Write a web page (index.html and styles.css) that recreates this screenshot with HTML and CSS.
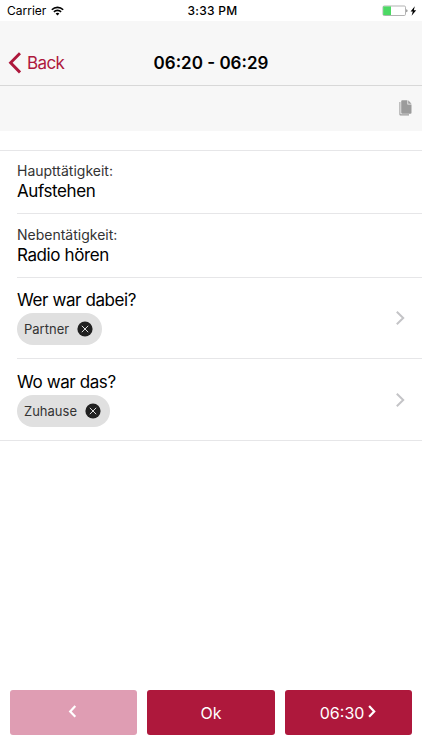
FILE: index.html
```html
<!DOCTYPE html>
<html lang="de">
<head>
    <meta charset="UTF-8">
    <meta name="viewport" content="width=device-width, initial-scale=1.0">
    <title>06:20 - 06:29</title>
    <link rel="stylesheet" href="styles.css">
</head>
<body>
    <div class="status-bar">
        <div class="status-left">
            <span class="carrier">Carrier</span>
            <svg class="wifi" width="13" height="10" viewBox="0 0 13 10" fill="none" stroke="#000" stroke-width="1.6">
                <path d="M0.8 3.7a8.1 8.1 0 0 1 11.4 0"/>
                <path d="M2.9 5.9a5.1 5.1 0 0 1 7.2 0"/>
                <path d="M6.5 9.5L4.6 7.6a2.7 2.7 0 0 1 3.8 0z" fill="#000" stroke="none"/>
            </svg>
        </div>
        <span class="clock">3:33 PM</span>
        <div class="status-right">
            <svg width="36" height="12" viewBox="0 0 36 12">
                <rect x="1" y="1" width="22.5" height="9.5" rx="1.2" fill="#fff" stroke="#aaa" stroke-width="0.9"/>
                <rect x="1.2" y="1.4" width="7.8" height="8.7" fill="#4cd964"/>
                <path d="M24.3 4.2c1.6.4 1.6 2.7 0 3.1z" fill="#777"/>
                <path d="M32.8 1.2L28.6 6.5h2.2l-1.2 4.3 4.6-5.6h-2.4z" fill="#000"/>
            </svg>
        </div>
    </div>

    <header class="nav-bar">
        <a href="#" class="back">
            <svg width="13" height="22" viewBox="0 0 13 22" fill="none" stroke="#ae183c" stroke-width="2.9">
                <path d="M12 1.2L2.6 10.8l9.4 9.6"/>
            </svg>
            <span>Back</span>
        </a>
        <h1>06:20 - 06:29</h1>
    </header>

    <div class="toolbar">
        <svg width="13" height="16" viewBox="0 0 13 16">
            <path d="M0.4 2h1v12.2h8.6v1.4H1.4a1 1 0 0 1-1-1z" fill="#9b9b9b"/>
            <path d="M3.2 0.3h5.2v4.2h4.1v8.2a1 1 0 0 1-1 1H3.2a1 1 0 0 1-1-1V1.3a1 1 0 0 1 1-1z" fill="#9b9b9b"/>
            <path d="M9.2 0.3l3.3 3.4H9.2z" fill="#9b9b9b"/>
        </svg>
    </div>

    <main class="list">
        <div class="item">
            <span class="label">Haupttätigkeit:</span>
            <span class="value">Aufstehen</span>
        </div>
        <div class="item">
            <span class="label">Nebentätigkeit:</span>
            <span class="value">Radio hören</span>
        </div>
        <div class="item item-link">
            <div class="item-content">
                <span class="value">Wer war dabei?</span>
                <div class="chip">
                    <span>Partner</span>
                    <svg width="16" height="16" viewBox="0 0 16 16">
                        <circle cx="8" cy="8" r="7.6" fill="#202020"/>
                        <path d="M4.8 4.8l6.4 6.4M11.2 4.8l-6.4 6.4" stroke="#ddd" stroke-width="1"/>
                    </svg>
                </div>
            </div>
            <svg class="arrow" width="9" height="14" viewBox="0 0 9 14" fill="none" stroke="#c4c4c7" stroke-width="2">
                <path d="M0.8 0.8L7.2 7 0.8 13.2"/>
            </svg>
        </div>
        <div class="item item-link">
            <div class="item-content">
                <span class="value">Wo war das?</span>
                <div class="chip">
                    <span>Zuhause</span>
                    <svg width="16" height="16" viewBox="0 0 16 16">
                        <circle cx="8" cy="8" r="7.6" fill="#202020"/>
                        <path d="M4.8 4.8l6.4 6.4M11.2 4.8l-6.4 6.4" stroke="#ddd" stroke-width="1"/>
                    </svg>
                </div>
            </div>
            <svg class="arrow" width="9" height="14" viewBox="0 0 9 14" fill="none" stroke="#c4c4c7" stroke-width="2">
                <path d="M0.8 0.8L7.2 7 0.8 13.2"/>
            </svg>
        </div>
    </main>

    <footer class="buttons">
        <button class="btn" disabled>
            <svg width="12" height="15" viewBox="0 0 12 15" fill="none" stroke="#fff" stroke-width="2.2">
                <path d="M7.3 1L2.2 6.4l5.1 5.4"/>
            </svg>
        </button>
        <button class="btn">Ok</button>
        <button class="btn">
            <span>06:30</span>
            <svg width="8" height="15" viewBox="0 0 8 15" fill="none" stroke="#fff" stroke-width="2.2">
                <path d="M1.1 1l5.1 5.4-5.1 5.4"/>
            </svg>
        </button>
    </footer>
</body>
</html>
```

FILE: styles.css
```css
* {
    box-sizing: border-box;
}

body {
    font-family: Inter, 'Liberation Sans', sans-serif;
    background: #fff;
    color: #000;
    margin: 0;
    height: 750px;
    display: flex;
    flex-direction: column;
    overflow: hidden;
}

svg {
    display: block;
    flex-shrink: 0;
}

.status-bar {
    height: 21px;
    padding: 0 4px 0 7px;
    display: grid;
    grid-template-columns: 1fr auto 1fr;
    align-items: center;
    font-size: 12px;
}

.status-left {
    display: flex;
    align-items: center;
    gap: 5px;
}

.clock {
    font-weight: 500;
    letter-spacing: 0.3px;
}

.status-right {
    display: flex;
    justify-content: flex-end;
}

.nav-bar {
    height: 65px;
    padding: 20px 8px 0;
    background: #f7f7f7;
    border-bottom: 1px solid #d8d8d8;
    display: grid;
    grid-template-columns: 1fr auto 1fr;
    align-items: center;
}

.back {
    display: flex;
    align-items: center;
    gap: 6px;
    color: #ae183c;
    font-size: 17px;
    letter-spacing: -0.6px;
    text-decoration: none;
}

h1 {
    font-size: 17px;
    font-weight: 600;
    margin: 0;
}

.toolbar {
    height: 45px;
    padding: 0 10px 2px 0;
    background: #f7f7f7;
    display: flex;
    align-items: center;
    justify-content: flex-end;
}

.list {
    margin-top: 19px;
    padding-left: 17px;
    border-top: 1px solid #e6e6e8;
    border-bottom: 1px solid #e6e6e8;
}

.item {
    height: 63px;
    padding-top: 10px;
    display: flex;
    flex-direction: column;
    border-bottom: 1px solid #e6e6e8;
}

.item:nth-child(2) {
    height: 64px;
    padding-top: 11px;
}

.item-link {
    height: 81px;
    padding: 12px 17px 0 0;
    flex-direction: row;
    justify-content: space-between;
}

.item:last-child {
    padding-top: 13px;
    border-bottom: none;
}

.label {
    font-size: 14px;
    line-height: 20px;
    color: #333;
}

.value {
    display: block;
    font-size: 17px;
    line-height: 21px;
    letter-spacing: -0.4px;
}

.chip {
    display: inline-flex;
    align-items: center;
    gap: 8px;
    height: 32px;
    margin-top: 2px;
    padding: 0 9px 0 7px;
    border-radius: 16px;
    background: #e0e0e0;
    color: #333;
    font-size: 13px;
}

.arrow {
    margin-top: 21px;
}

.buttons {
    margin-top: auto;
    padding: 0 10.4px 15px;
    display: grid;
    grid-template-columns: repeat(3, 1fr);
    gap: 10px;
}

.btn {
    height: 45px;
    padding: 0;
    display: flex;
    align-items: center;
    justify-content: center;
    gap: 4px;
    border: none;
    border-radius: 3px;
    background: #ae183c;
    color: #fff;
    font-family: inherit;
    font-size: 16px;
}

.btn:disabled {
    background: #df9db3;
}
```
